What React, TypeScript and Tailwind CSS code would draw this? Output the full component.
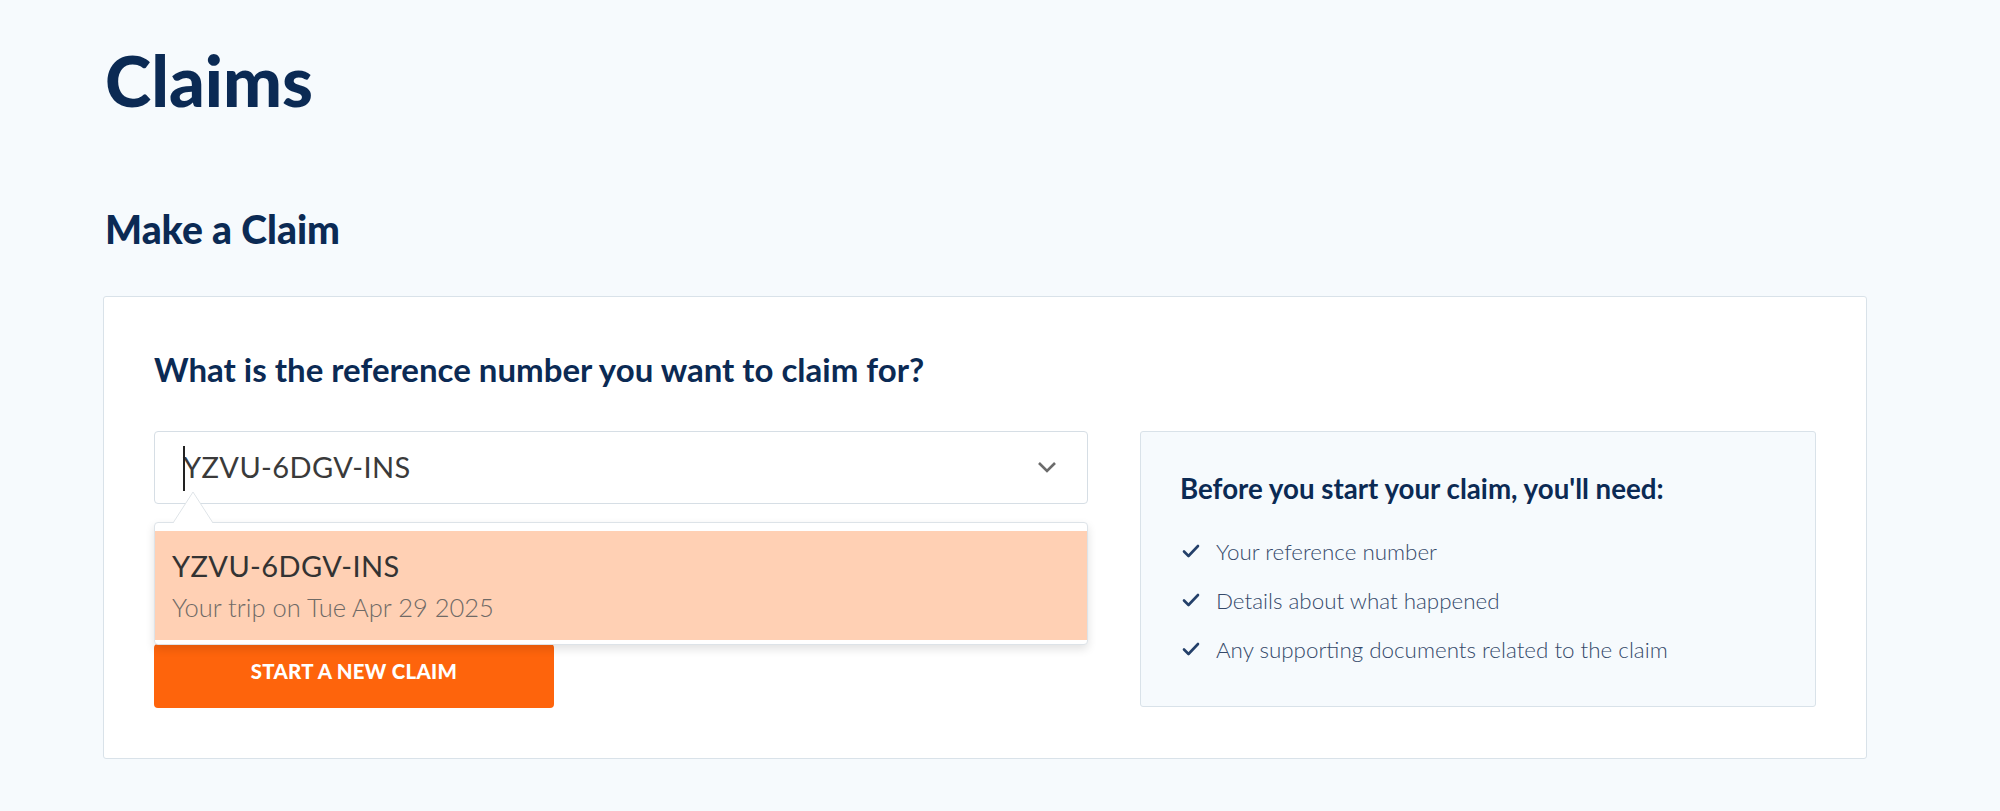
import React from "react";

function Check() {
  return (
    <svg width="18" height="14" viewBox="0 0 18 14" className="shrink-0">
      <path d="M2 7.5 L6.5 12 L16 2" fill="none" stroke="#24406a" strokeWidth="2.6" strokeLinecap="round" strokeLinejoin="round" />
    </svg>
  );
}

export default function App() {
  const items = [
    "Your reference number",
    "Details about what happened",
    "Any supporting documents related to the claim",
  ];
  return (
    <div className="min-h-[811px] w-[2000px] bg-[#f6fafd] font-['Lato',sans-serif] pt-[45px]">
      <div className="ml-[103px] w-[1764px]">
        <h1 className="pl-[2px] text-[70px] leading-none font-black text-[#0b2a54]">Claims</h1>
        <h2 className="mt-[95px] pl-[2px] text-[39px] leading-none font-black text-[#0b2a54]">Make a Claim</h2>
        <div className="mt-[47px] rounded-[3px] border border-[#d9e2e9] bg-white px-[50px] pt-[53px] pb-[50px]">
          <div className="text-[33px] leading-[1.2] font-bold text-[#0b2a54]">
            What is the reference number you want to claim for?
          </div>
          <div className="mt-[41px] flex gap-[52px]">
            <div className="w-[934px] shrink-0 flex flex-col">
              <div className="relative">
                <div className="relative flex h-[73px] items-center rounded-[4px] border border-[#d6dee5] bg-white pl-[28px] pr-[30px]">
                  <span className="absolute left-[28px] top-[14px] h-[45px] w-[1.5px] bg-[#222]" />
                  <span className="flex-1 text-[29px] tracking-[0.4px] font-normal text-[#3a3a3a]">YZVU-6DGV-INS</span>
                  <svg width="20" height="12" viewBox="0 0 20 12">
                    <path d="M2 2 L10 10 L18 2" fill="none" stroke="#6b6b6b" strokeWidth="2.6" />
                  </svg>
                </div>
                <div className="absolute left-0 right-0 top-[91px] z-10 rounded-[4px] border border-[#dde3e8] bg-white pt-[8px] pb-[4px] shadow-[0_4px_10px_rgba(0,0,0,0.12)]">
                  <div className="bg-[#ffd0b4] pl-[17px] pt-[18px] pb-[17px]">
                    <div className="text-[29px] tracking-[0.4px] leading-[1.2] text-[#333]">YZVU-6DGV-INS</div>
                    <div className="mt-[9px] text-[25.5px] leading-[1.2] font-light text-[#6f6a66]">Your trip on Tue Apr 29 2025</div>
                  </div>
                </div>
                <svg className="absolute left-[18px] top-[60px] z-20" width="42" height="33" viewBox="0 0 42 33">
                  <polygon points="1,32 21,1 41,32" fill="white" />
                  <polyline points="1,32 21,1 41,32" fill="none" stroke="#dfe4e8" strokeWidth="1" />
                </svg>
              </div>
              <button className="mt-[140px] h-[64px] w-[400px] rounded-[4px] bg-[#fe640c] pb-[8px] text-[20.4px] font-black tracking-[0.3px] text-white">
                START A NEW CLAIM
              </button>
            </div>
            <div className="h-[276px] w-[676px] shrink-0 rounded-[3px] border border-[#d9e2e9] bg-[#f6fafd] pl-[39px] pt-[40px]">
              <div className="text-[27.7px] leading-[1.2] font-bold text-[#0b2a54]">
                Before you start your claim, you'll need:
              </div>
              <ul className="mt-[22px] flex flex-col">
                {items.map((t) => (
                  <li key={t} className="flex h-[49px] items-center gap-[16px] pl-[2px]">
                    <Check />
                    <span className="text-[22.4px] font-light text-[#34496a]">{t}</span>
                  </li>
                ))}
              </ul>
            </div>
          </div>
        </div>
      </div>
    </div>
  );
}
